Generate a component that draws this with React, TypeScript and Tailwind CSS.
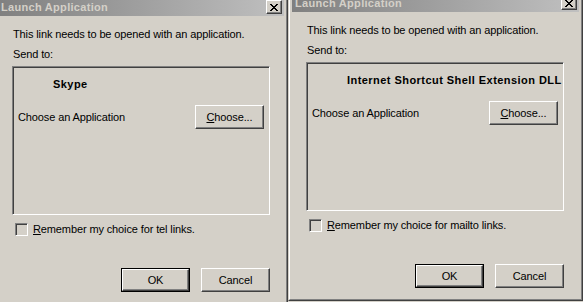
import React from "react";

const FONT = { fontFamily: '"Liberation Sans", Arial, sans-serif' };

// raised 3d edge used by buttons
const raised =
  "border border-t-white border-l-white border-r-[#404040] border-b-[#404040] shadow-[inset_-1px_-1px_0_#808080]";
// sunken 3d edge used by group box and check box
const sunken =
  "border border-t-[#808080] border-l-[#808080] border-r-white border-b-white shadow-[inset_1px_1px_0_#404040,inset_-1px_-1px_0_#d4d0c8]";

const CloseGlyph = () => (
  <svg width="8" height="7" viewBox="0 0 8 7" shapeRendering="crispEdges">
    <path
      d="M0 0h2v1H0zM6 0h2v1H6zM1 1h2v1H1zM5 1h2v1H5zM2 2h4v1H2zM3 3h2v1H3zM2 4h4v1H2zM1 5h2v1H1zM5 5h2v1H5zM0 6h2v1H0zM6 6h2v1H6z"
      fill="#000"
    />
  </svg>
);

interface WinButtonProps {
  label: React.ReactNode;
  isDefault?: boolean;
}

const WinButton: React.FC<WinButtonProps> = ({ label, isDefault }) => {
  if (isDefault) {
    return (
      <div className="w-[69px] h-6 border border-black">
        <div className={`w-full h-full ${raised} flex items-center justify-center text-[11px] text-black`}>
          {label}
        </div>
      </div>
    );
  }
  return (
    <div className={`w-[69px] h-6 ${raised} flex items-center justify-center text-[11px] text-black`}>
      {label}
    </div>
  );
};

interface DialogProps {
  app: string;
  scheme: string;
}

const Dialog: React.FC<DialogProps> = ({ app, scheme }) => (
  <div className="h-[311px] bg-[#d4d0c8] border border-t-[#d4d0c8] border-l-[#d4d0c8] border-r-[#404040] border-b-[#404040] shrink-0">
    <div className="h-full border border-t-white border-l-white border-r-[#808080] border-b-[#808080] p-[2px] flex flex-col">
      {/* title bar */}
      <div className="h-[18px] bg-gradient-to-r from-[#808080] to-[#c0c0c0] flex items-center pl-[3px] pr-[2px]">
        <span className="text-[11px] font-bold text-[#d4d0c8] flex-1 leading-none tracking-[0.3px]">
          Launch Application
        </span>
        <div className={`w-4 h-[14px] bg-[#d4d0c8] ${raised} flex items-center justify-center`}>
          <CloseGlyph />
        </div>
      </div>

      <div className="flex flex-col pl-[14px] pr-[10px] text-[11px] text-black leading-[13px] tracking-[-0.12px]">
        <p className="mt-[12px] pl-px">This link needs to be opened with an application.</p>
        <p className="mt-[7px] pl-px">Send to:</p>

        <div className={`mt-[5px] w-[258px] h-[149px] ${sunken} flex flex-col`}>
          <p className="mt-[11px] ml-[40px] font-bold tracking-[0.45px] whitespace-nowrap">{app}</p>
          <div className="mt-[14px] flex items-center justify-between pl-[5px] pr-[5px]">
            <span>Choose an Application</span>
            <WinButton
              label={
                <span>
                  <span className="underline">C</span>hoose...
                </span>
              }
            />
          </div>
        </div>

        <div className="mt-2 flex items-center pl-[3px]">
          <div className={`w-[13px] h-[13px] ${sunken}`} />
          <span className="ml-[5px]">
            <span className="underline">R</span>emember my choice for {scheme} links.
          </span>
        </div>

        <div className="mt-[32px] flex justify-end gap-[11px] w-[258px]">
          <WinButton label="OK" isDefault />
          <WinButton label="Cancel" />
        </div>
      </div>
    </div>
  </div>
);

export default function App() {
  return (
    <div className="w-[583px] h-[302px] overflow-hidden flex bg-[#d4d0c8]" style={FONT}>
      <div className="w-[288px] h-full overflow-hidden shrink-0">
        <div className="-ml-[6px] -mt-[6px] w-[294px]">
          <Dialog app="Skype" scheme="tel" />
        </div>
      </div>
      <div className="w-[295px] h-full overflow-hidden shrink-0">
        <div className="-mt-[10px] w-[295px]">
          <Dialog app="Internet Shortcut Shell Extension DLL" scheme="mailto" />
        </div>
      </div>
    </div>
  );
}
